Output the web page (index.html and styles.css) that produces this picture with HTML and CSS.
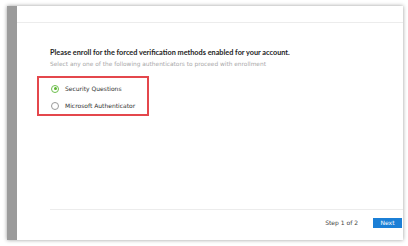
FILE: index.html
```html
<!DOCTYPE html>
<html lang="en">
  <head>
    <meta charset="UTF-8" />
    <title>Enrollment</title>
    <link rel="stylesheet" href="styles.css">
  </head>
  <body>
    <div class="shot">
      <div class="side"></div>
      <div class="main">
        <div class="top"></div>
        <div class="content">
          <h1>Please enroll for the forced verification methods enabled for your account.</h1>
          <p class="sub">Select any one of the following authenticators to proceed with enrollment</p>
          <div class="choices">
            <label class="choice">
              <span class="radio checked"></span>
              <span>Security Questions</span>
            </label>
            <label class="choice">
              <span class="radio"></span>
              <span>Microsoft Authenticator</span>
            </label>
          </div>
        </div>
        <div class="footer">
          <span class="step">Step 1 of 2</span>
          <span class="next">Next</span>
        </div>
      </div>
    </div>
  </body>
</html>
```

FILE: styles.css
```css
* {
  margin: 0;
  padding: 0;
  box-sizing: border-box;
}
html,
body {
  width: 408px;
  height: 246px;
  background: #fff;
  overflow: hidden;
}
body {
  padding: 6px 0 0 7px;
  font-family: "DejaVu Sans", Verdana, sans-serif;
}
.shot {
  display: flex;
  width: 396px;
  height: 234px;
  box-shadow: 0 0 4px rgba(0, 0, 0, 0.4);
}
.side {
  width: 10px;
  background: #9b9b9b;
}
.main {
  flex: 1;
  display: flex;
  flex-direction: column;
  background: #fff;
}
.top {
  height: 17px;
  border-bottom: 1px solid #ececec;
}
.content {
  flex: 1;
  padding: 24px 0 0 33px;
}
/* heading */
.content h1 {
  font-family: Lato, sans-serif;
  font-size: 7.3px;
  line-height: 12px;
  font-weight: 700;
  color: #1e1e1e;
}
.sub {
  font-size: 5.85px;
  line-height: 10px;
  color: #a8a8a8;
}
/* red annotation box */
.choices {
  width: 112px;
  margin: 7px 0 0 -13px;
  padding: 2px 0 0 12px;
  height: 40px;
  border: 2px solid #e4474c;
}
.choice {
  display: flex;
  align-items: center;
  height: 17px;
  font-size: 6px;
  color: #333;
}
.radio {
  width: 8px;
  height: 8px;
  margin-right: 6px;
  border: 1px solid #9a9a9a;
  border-radius: 50%;
  position: relative;
}
.radio.checked {
  border-color: #6cbf4c;
}
.radio.checked::after {
  content: "";
  position: absolute;
  left: 1.5px;
  top: 1.5px;
  width: 3px;
  height: 3px;
  border-radius: 50%;
  background: #5cb531;
}
/* footer */
.footer {
  height: 31px;
  margin-left: 33px;
  padding: 8px 1px 0 0;
  border-top: 1px solid #ececec;
  display: flex;
  justify-content: flex-end;
  align-items: flex-start;
  gap: 15px;
}
.step {
  font-size: 6px;
  line-height: 10px;
  color: #444;
}
.next {
  width: 29px;
  height: 10px;
  line-height: 10px;
  text-align: center;
  font-size: 6px;
  color: #fff;
  background: #1b7fd6;
}
```
